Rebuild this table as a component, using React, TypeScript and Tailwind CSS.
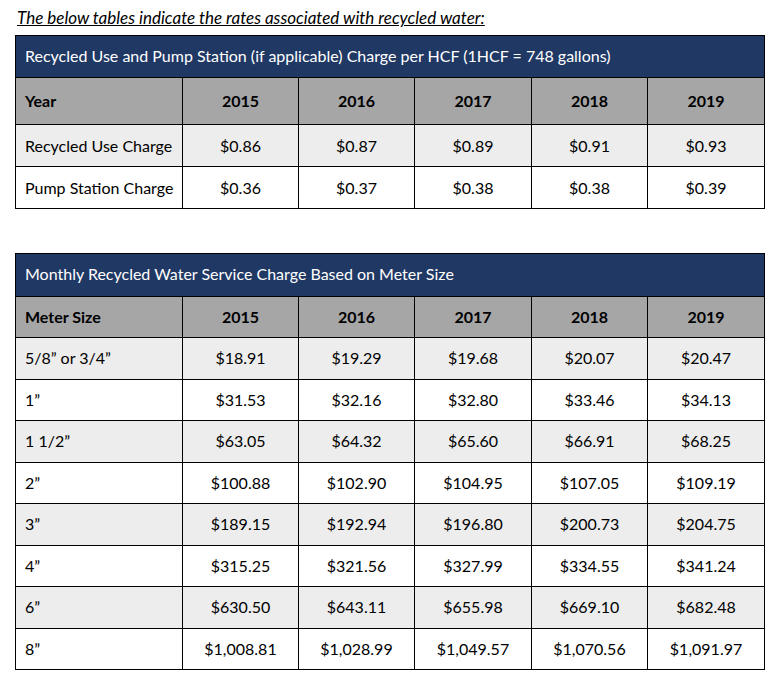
import React from 'react';

const years = ['2015', '2016', '2017', '2018', '2019'];

const useRows = [
  { label: 'Recycled Use Charge', values: ['$0.86', '$0.87', '$0.89', '$0.91', '$0.93'] },
  { label: 'Pump Station Charge', values: ['$0.36', '$0.37', '$0.38', '$0.38', '$0.39'] },
];

const meterRows = [
  { label: '5/8\u201d or 3/4\u201d', values: ['$18.91', '$19.29', '$19.68', '$20.07', '$20.47'] },
  { label: '1\u201d', values: ['$31.53', '$32.16', '$32.80', '$33.46', '$34.13'] },
  { label: '1 1/2\u201d', values: ['$63.05', '$64.32', '$65.60', '$66.91', '$68.25'] },
  { label: '2\u201d', values: ['$100.88', '$102.90', '$104.95', '$107.05', '$109.19'] },
  { label: '3\u201d', values: ['$189.15', '$192.94', '$196.80', '$200.73', '$204.75'] },
  { label: '4\u201d', values: ['$315.25', '$321.56', '$327.99', '$334.55', '$341.24'] },
  { label: '6\u201d', values: ['$630.50', '$643.11', '$655.98', '$669.10', '$682.48'] },
  { label: '8\u201d', values: ['$1,008.81', '$1,028.99', '$1,049.57', '$1,070.56', '$1,091.97'] },
];

interface RateTableProps {
  title: string;
  firstHeader: string;
  rows: { label: string; values: string[] }[];
  titleH: string;
  headH: string;
  rowH: string;
}

const RateTable: React.FC<RateTableProps> = ({ title, firstHeader, rows, titleH, headH, rowH }) => {
  return (
    <table className="table-fixed border-collapse w-[749px] text-[16px] text-black">
      <colgroup>
        <col className="w-[167px]" />
        <col className="w-[116px]" />
        <col className="w-[116px]" />
        <col className="w-[117px]" />
        <col className="w-[116px]" />
        <col className="w-[117px]" />
      </colgroup>
      <thead>
        <tr className={titleH}>
          <th colSpan={6} className="border border-black bg-[#203864] text-white font-normal text-left pl-[9px] pb-[2px]">
            {title}
          </th>
        </tr>
        <tr className={headH}>
          <th className="border border-black bg-[#a6a6a6] font-bold text-left pl-[9px]">{firstHeader}</th>
          {years.map((y) => (
            <th key={y} className="border border-black bg-[#a6a6a6] font-bold text-center">{y}</th>
          ))}
        </tr>
      </thead>
      <tbody>
        {rows.map((r, i) => (
          <tr key={r.label} className={`${rowH} ${i % 2 === 0 ? 'bg-[#ededed]' : 'bg-white'}`}>
            <td className="border border-black text-left pl-[9px] whitespace-nowrap">{r.label}</td>
            {r.values.map((v, j) => (
              <td key={j} className="border border-black text-center">{v}</td>
            ))}
          </tr>
        ))}
      </tbody>
    </table>
  );
};

export default function App() {
  return (
    <div className="w-[780px] h-[680px] bg-white overflow-hidden font-['Lato','Liberation_Sans',sans-serif]">
      <p className="pl-[17px] pt-[7px] h-[35px] text-[17px] italic underline leading-[21px] text-black">
        The below tables indicate the rates associated with recycled water:
      </p>
      <div className="pl-[15px]">
        <RateTable
          title="Recycled Use and Pump Station (if applicable) Charge per HCF (1HCF = 748 gallons)"
          firstHeader="Year"
          rows={useRows}
          titleH="h-[42px]"
          headH="h-[47px]"
          rowH="h-[42px]"
        />
      </div>
      <div className="pl-[15px] pt-[44px]">
        <RateTable
          title="Monthly Recycled Water Service Charge Based on Meter Size"
          firstHeader="Meter Size"
          rows={meterRows}
          titleH="h-[43px]"
          headH="h-[41px]"
          rowH="h-[41.5px]"
        />
      </div>
    </div>
  );
}
